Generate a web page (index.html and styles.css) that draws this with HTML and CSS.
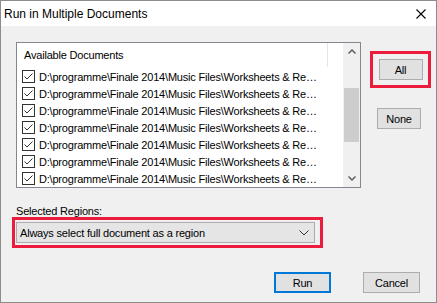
FILE: index.html
```html
<!DOCTYPE html>
<html lang="en">
    <head>
        <meta charset="UTF-8">
        <title>Run in Multiple Documents</title>
        <link rel="stylesheet" href="styles.css">
    </head>
    <body>
        <div class="window">
            <div class="titlebar">
                <span>Run in Multiple Documents</span>
                <svg class="close" width="10" height="10" viewBox="0 0 10 10">
                    <path d="M0.5 0.5 L9.5 9.5 M9.5 0.5 L0.5 9.5" stroke="#000" stroke-width="1.1" fill="none"/>
                </svg>
            </div>

            <div class="content">
                <div class="top">
                    <div class="listbox">
                        <div class="list">
                            <div class="list-header"><span class="header-cell">Available Documents</span></div>
                            <div class="rows" id="rows"></div>
                        </div>
                        <div class="scrollbar">
                            <div class="sb-btn">
                                <svg width="8" height="5" viewBox="0 0 8 5"><path d="M0.5 4.5 L4 1 L7.5 4.5" stroke="#606060" stroke-width="1.5" fill="none"/></svg>
                            </div>
                            <div class="sb-track"><div class="sb-thumb"></div></div>
                            <div class="sb-btn">
                                <svg width="8" height="5" viewBox="0 0 8 5"><path d="M0.5 0.5 L4 4 L7.5 0.5" stroke="#606060" stroke-width="1.5" fill="none"/></svg>
                            </div>
                        </div>
                    </div>

                    <div class="side">
                        <div class="highlight all-box">
                            <button class="btn">All</button>
                        </div>
                        <button class="btn none">None</button>
                    </div>
                </div>

                <div class="regions">
                    <div class="label">Selected Regions:</div>
                    <div class="highlight combo-box">
                        <div class="combo">
                            <span>Always select full document as a region</span>
                            <svg width="10" height="6" viewBox="0 0 10 6"><path d="M0.5 0.5 L5 5 L9.5 0.5" stroke="#333" stroke-width="1" fill="none"/></svg>
                        </div>
                    </div>
                </div>

                <div class="actions">
                    <button class="btn wide default">Run</button>
                    <button class="btn wide">Cancel</button>
                </div>
            </div>
        </div>

        <template id="row">
            <div class="row">
                <svg class="check" width="13" height="13" viewBox="0 0 13 13">
                    <rect x="0.5" y="0.5" width="12" height="12" fill="#fff" stroke="#333"/>
                    <path d="M2.5 6.5 L5 9 L10.5 3.5" stroke="#333" stroke-width="1" fill="none"/>
                </svg>
                <span class="path">D:\programme\Finale 2014\Music Files\Worksheets &amp; Re…</span>
            </div>
        </template>
        <script>
            var rows = document.getElementById("rows");
            var tpl = document.getElementById("row");
            for (var i = 0; i < 7; i++) {
                rows.appendChild(tpl.content.cloneNode(true));
            }
        </script>
    </body>
</html>
```

FILE: styles.css
```css
body {
    margin: 0;
    font-family: "Liberation Sans", Arial, sans-serif;
    font-size: 11px;
    letter-spacing: -0.2px;
    color: #000;
}
.window {
    width: 437px;
    height: 303px;
    box-sizing: border-box;
    border: 1px solid #8c8c8c;
    background-color: #f0f0f0;
    display: flex;
    flex-direction: column;
}
.titlebar {
    height: 25px;
    flex: none;
    background-color: #fff;
    display: flex;
    align-items: center;
    justify-content: space-between;
    padding: 0 10px 0 3px;
    font-size: 12px;
    letter-spacing: 0;
}
.content {
    padding: 16px 0 0 15px;
}
.top {
    display: flex;
    align-items: flex-start;
}
.listbox {
    width: 345px;
    height: 146px;
    box-sizing: border-box;
    border: 1px solid #828790;
    background-color: #fff;
    display: flex;
}
.list {
    flex: 1;
    overflow: hidden;
}
.list-header {
    height: 25px;
    display: flex;
}
.header-cell {
    width: 311px;
    box-sizing: border-box;
    padding-left: 7px;
    line-height: 25px;
    border-right: 1px solid #e5e5e5;
    height: 24px;
}
.row {
    height: 17px;
    display: flex;
    align-items: center;
    gap: 4px;
    padding-left: 5px;
    white-space: nowrap;
}
.path {
    overflow: hidden;
    text-overflow: ellipsis;
    max-width: 282px;
}
.check {
    flex: none;
}
.scrollbar {
    width: 17px;
    flex: none;
    background-color: #f0f0f0;
    display: flex;
    flex-direction: column;
}
.sb-btn {
    height: 17px;
    display: flex;
    align-items: center;
    justify-content: center;
}
.sb-track {
    flex: 1;
    padding: 28px 1px 0 1px;
}
.sb-thumb {
    height: 54px;
    background-color: #cdcdcd;
}
.side {
    margin: 9px 0 0 9px;
    display: flex;
    flex-direction: column;
}
.highlight {
    border: 3px solid #ec1c3c;
    box-sizing: border-box;
}
.all-box {
    width: 61px;
    height: 37px;
    display: flex;
    align-items: center;
    justify-content: center;
}
.btn {
    width: 44px;
    height: 21px;
    box-sizing: border-box;
    border: 1px solid #adadad;
    background-color: #e1e1e1;
    font-family: inherit;
    font-size: 11px;
    letter-spacing: -0.2px;
    color: #000;
    padding: 0;
}
.none {
    margin: 20px 0 0 7px;
}
.regions {
    margin-top: 16px;
}
.label {
    height: 13px;
    line-height: 15px;
}
.combo-box {
    width: 311px;
    height: 31px;
    margin-left: -4px;
    padding: 2px 5px 2px 1px;
}
.combo {
    height: 21px;
    box-sizing: border-box;
    border: 1px solid #acacac;
    background-color: #e5e5e5;
    display: flex;
    align-items: center;
    justify-content: space-between;
    padding: 0 5px 0 3px;
}
.actions {
    display: flex;
    justify-content: flex-end;
    gap: 32px;
    margin-top: 24px;
    padding-right: 16px;
}
.wide {
    width: 57px;
}
.default {
    border: 2px solid #0078d7;
}
```
